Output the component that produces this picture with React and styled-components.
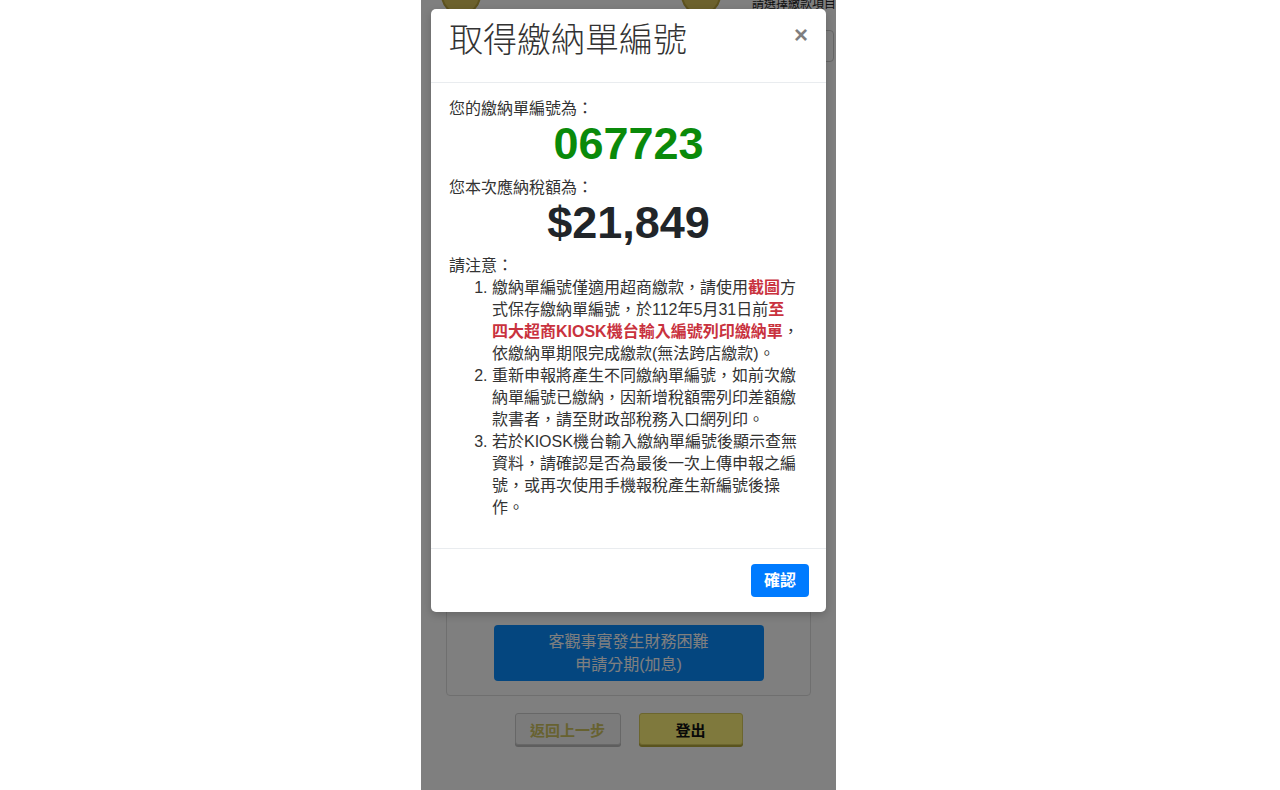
import React from 'react';
import styled, { createGlobalStyle } from 'styled-components';

const GlobalStyle = createGlobalStyle`
  html, body {
    margin: 0;
    padding: 0;
    background: #ffffff;
  }
  body {
    font-family: "Liberation Sans", "Noto Sans CJK TC", sans-serif;
    color: #212529;
  }
`;

const Screen = styled.div`
  position: relative;
  width: 415px;
  height: 790px;
  margin-left: 421px;
  overflow: hidden;
  background: #ffffff;
`;

/* page under the dialog */
const Page = styled.div`
  display: flex;
  flex-direction: column;
  padding: 0 25px;
`;

const TopRow = styled.div`
  display: flex;
  align-items: flex-start;
  justify-content: space-between;
  height: 30px;
`;

const Logo = styled.div`
  width: 36px;
  height: 36px;
  margin-top: -25px;
  margin-left: ${(p) => p.$ml || 0}px;
  border-radius: 50%;
  background: #d8c25a;
  border: 2px solid #b9a23c;
`;

const TopHint = styled.div`
  margin-top: -3px;
  margin-right: -25px;
  font-size: 12px;
  line-height: 14px;
  color: #222;
  white-space: nowrap;
`;

const Select = styled.div`
  align-self: flex-end;
  width: 230px;
  height: 30px;
  margin-right: -23px;
  border: 1px solid #ccc;
  border-radius: 4px;
`;

const Card = styled.div`
  display: flex;
  flex-direction: column;
  justify-content: flex-end;
  align-items: center;
  height: 633px;
  margin-top: 1px;
  padding: 0 15px 14px;
  border: 1px solid #dedede;
  border-radius: 4px;
  box-sizing: border-box;
`;

const OptionButton = styled.div`
  width: 270px;
  height: 56px;
  display: flex;
  flex-direction: column;
  align-items: center;
  justify-content: center;
  border-radius: 4px;
  background: #088cff;
  color: #ffffff;
  font-size: 16px;
  line-height: 23px;
`;

const BottomRow = styled.div`
  display: flex;
  justify-content: center;
  gap: 18px;
  margin-top: 17px;
`;

const PageButton = styled.div`
  width: ${(p) => p.$w}px;
  height: 32px;
  display: flex;
  align-items: center;
  justify-content: center;
  box-sizing: border-box;
  border: 1px solid ${(p) => (p.$yellow ? '#d9cc5c' : '#cfcfcf')};
  border-radius: 3px;
  background: ${(p) => (p.$yellow ? '#fff27a' : '#f6f6f6')};
  box-shadow: 0 2px 0 ${(p) => (p.$yellow ? '#b5a93c' : '#bdbdbd')};
  color: ${(p) => (p.$yellow ? '#111' : '#cfc460')};
  font-size: 15px;
  font-weight: 700;
`;

/* overlay + dialog */
const Backdrop = styled.div`
  position: absolute;
  inset: 0;
  background: rgba(0, 0, 0, 0.5);
`;

const DialogLayer = styled.div`
  position: absolute;
  inset: 0;
  padding: 9px 10px;
`;

const Dialog = styled.div`
  background: #ffffff;
  border-radius: 5px;
  box-shadow: 0 3px 9px rgba(0, 0, 0, 0.2);
`;

const Header = styled.div`
  display: flex;
  justify-content: space-between;
  align-items: flex-start;
  padding: 10px 18px 21px 18px;
  border-bottom: 1px solid #e9ecef;
`;

const Title = styled.h4`
  margin: 0;
  font-size: 34px;
  line-height: 42px;
  font-weight: 300;
  color: #333;
`;

const Close = styled.span`
  margin-top: 1px;
  font-size: 24px;
  line-height: 30px;
  font-weight: 700;
  color: #000;
  opacity: 0.5;
  cursor: pointer;
`;

const Body = styled.div`
  padding: 15px 18px 29px;
`;

const Label = styled.div`
  font-size: 16px;
  line-height: 22px;
  color: #333;
`;

const BigValue = styled.div`
  text-align: center;
  font-size: 45px;
  line-height: 48px;
  font-weight: 700;
  color: ${(p) => p.$color};
  margin-bottom: ${(p) => p.$mb}px;
`;

const Notes = styled.ol`
  margin: 0;
  padding-left: 43px;
  font-size: 16px;
  line-height: 22px;
  color: #333;
`;

const Line = styled.span`
  display: block;
  white-space: nowrap;
`;

const Mark = styled.span`
  color: #c9323e;
  font-weight: 700;
`;

const Footer = styled.div`
  display: flex;
  justify-content: flex-end;
  padding: 15px 17px 15px;
  border-top: 1px solid #e9ecef;
`;

const ConfirmButton = styled.button`
  font-family: inherit;
  padding: 6px 13px;
  font-size: 16px;
  line-height: 21px;
  font-weight: 700;
  color: #ffffff;
  background: #007bff;
  border: none;
  border-radius: 4px;
  cursor: pointer;
`;

const notes = [
  [
    ['繳納單編號僅適用超商繳款，請使用', { red: '截圖' }, '方'],
    ['式保存繳納單編號，於112年5月31日前', { red: '至' }],
    [{ red: '四大超商KIOSK機台輸入編號列印繳納單' }, '，'],
    ['依繳納單期限完成繳款(無法跨店繳款)。'],
  ],
  [
    ['重新申報將產生不同繳納單編號，如前次繳'],
    ['納單編號已繳納，因新增稅額需列印差額繳'],
    ['款書者，請至財政部稅務入口網列印。'],
  ],
  [
    ['若於KIOSK機台輸入繳納單編號後顯示查無'],
    ['資料，請確認是否為最後一次上傳申報之編'],
    ['號，或再次使用手機報稅產生新編號後操'],
    ['作。'],
  ],
];

const App = () => {
  return (
    <Screen>
      <GlobalStyle />
      <Page>
        <TopRow>
          <Logo $ml={-5} />
          <Logo $ml={170} />
          <TopHint>請選擇繳款項目</TopHint>
        </TopRow>
        <Select />
        <Card>
          <OptionButton>
            <span>客觀事實發生財務困難</span>
            <span>申請分期(加息)</span>
          </OptionButton>
        </Card>
        <BottomRow>
          <PageButton $w={106}>返回上一步</PageButton>
          <PageButton $w={104} $yellow>登出</PageButton>
        </BottomRow>
      </Page>

      <Backdrop />
      <DialogLayer>
        <Dialog>
          <Header>
            <Title>取得繳納單編號</Title>
            <Close>×</Close>
          </Header>
          <Body>
            <Label>您的繳納單編號為：</Label>
            <BigValue $color="#0a8a0a" $mb={9}>067723</BigValue>
            <Label>您本次應納稅額為：</Label>
            <BigValue $color="#212529" $mb={8}>$21,849</BigValue>
            <Label>請注意：</Label>
            <Notes>
              {notes.map((item, i) => (
                <li key={i}>
                  {item.map((line, j) => (
                    <Line key={j}>
                      {line.map((seg, k) =>
                        typeof seg === 'string' ? seg : <Mark key={k}>{seg.red}</Mark>
                      )}
                    </Line>
                  ))}
                </li>
              ))}
            </Notes>
          </Body>
          <Footer>
            <ConfirmButton>確認</ConfirmButton>
          </Footer>
        </Dialog>
      </DialogLayer>
    </Screen>
  );
};

export default App;
